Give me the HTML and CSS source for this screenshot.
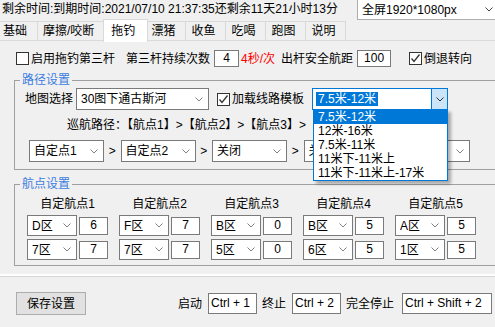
FILE: index.html
```html
<!doctype html>
<html lang="zh">

<head>
    <meta charset="utf-8">
    <title>拖钓设置</title>
    <link rel="stylesheet" href="styles.css">
</head>

<body>
    <div class="topbar">
        <span class="expire">剩余时间:到期时间:2021/07/10 21:37:35还剩余11天21小时13分</span>
        <div class="sel res">全屏1920*1080px<svg class="arr" width="8" height="5" viewBox="0 0 8 5"><path d="M0.5 0.5L4 4L7.5 0.5"/></svg></div>
    </div>

    <div class="tabs">
        <div class="tab">基础</div>
        <div class="tab">摩擦/咬断</div>
        <div class="tab on">拖钓</div>
        <div class="tab">漂猪</div>
        <div class="tab">收鱼</div>
        <div class="tab">吃喝</div>
        <div class="tab">跑图</div>
        <div class="tab">说明</div>
    </div>

    <div class="opts">
        <span class="cb"></span>
        <span class="cb-text">启用拖钓第三杆</span>
        <span class="opt-gap">第三杆持续次数</span>
        <span class="num n-times">4</span>
        <span class="red">4秒/次</span>
        <span class="opt-dist">出杆安全航距</span>
        <span class="num n-dist">100</span>
        <span class="cb checked cb-back"><svg width="11" height="11" viewBox="0 0 11 11"><path d="M1.5 5.5L4 8.5L9.5 1.5"/></svg></span>
        <span class="cb-text">倒退转向</span>
    </div>

    <fieldset class="group route">
        <legend>路径设置</legend>
        <div class="maprow">
            <span>地图选择</span>
            <div class="sel sel-map">30图下通古斯河<svg class="arr" width="8" height="5" viewBox="0 0 8 5"><path d="M0.5 0.5L4 4L7.5 0.5"/></svg></div>
            <span class="cb checked cb-tpl"><svg width="11" height="11" viewBox="0 0 11 11"><path d="M1.5 5.5L4 8.5L9.5 1.5"/></svg></span>
            <span class="cb-text">加载线路模板</span>
            <div class="combo">
                <span class="hl">7.5米-12米</span>
                <span class="combo-btn"><svg width="8" height="5" viewBox="0 0 8 5"><path d="M0.5 0.5L4 4L7.5 0.5"/></svg></span>
                <ul class="droplist">
                    <li class="cur">7.5米-12米</li>
                    <li>12米-16米</li>
                    <li>7.5米-11米</li>
                    <li>11米下-11米上</li>
                    <li>11米下-11米上-17米</li>
                </ul>
            </div>
        </div>
        <div class="cruise">巡航路径：【航点1】&gt;【航点2】&gt;【航点3】&gt;</div>
        <div class="pathrow">
            <div class="sel sel-pt">自定点1<svg class="arr" width="8" height="5" viewBox="0 0 8 5"><path d="M0.5 0.5L4 4L7.5 0.5"/></svg></div>
            <span class="gt">&gt;</span>
            <div class="sel sel-pt">自定点2<svg class="arr" width="8" height="5" viewBox="0 0 8 5"><path d="M0.5 0.5L4 4L7.5 0.5"/></svg></div>
            <span class="gt">&gt;</span>
            <div class="sel sel-pt">关闭<svg class="arr" width="8" height="5" viewBox="0 0 8 5"><path d="M0.5 0.5L4 4L7.5 0.5"/></svg></div>
            <span class="gt">&gt;</span>
            <div class="sel sel-pt">关闭<svg class="arr" width="8" height="5" viewBox="0 0 8 5"><path d="M0.5 0.5L4 4L7.5 0.5"/></svg></div>
            <span class="gt">&gt;</span>
            <div class="sel sel-pt">关闭<svg class="arr" width="8" height="5" viewBox="0 0 8 5"><path d="M0.5 0.5L4 4L7.5 0.5"/></svg></div>
        </div>
    </fieldset>

    <fieldset class="group points">
        <legend>航点设置</legend>
        <div class="wpgrid">
            <div class="wp">
                <div class="wp-title">自定航点1</div>
                <div class="wp-row">
                    <div class="sel sel-zone">D区<svg class="arr" width="8" height="5" viewBox="0 0 8 5"><path d="M0.5 0.5L4 4L7.5 0.5"/></svg></div>
                    <span class="num n-wp">6</span>
                </div>
                <div class="wp-row">
                    <div class="sel sel-zone">7区<svg class="arr" width="8" height="5" viewBox="0 0 8 5"><path d="M0.5 0.5L4 4L7.5 0.5"/></svg></div>
                    <span class="num n-wp">7</span>
                </div>
            </div>
            <div class="wp">
                <div class="wp-title">自定航点2</div>
                <div class="wp-row">
                    <div class="sel sel-zone">F区<svg class="arr" width="8" height="5" viewBox="0 0 8 5"><path d="M0.5 0.5L4 4L7.5 0.5"/></svg></div>
                    <span class="num n-wp">7</span>
                </div>
                <div class="wp-row">
                    <div class="sel sel-zone">7区<svg class="arr" width="8" height="5" viewBox="0 0 8 5"><path d="M0.5 0.5L4 4L7.5 0.5"/></svg></div>
                    <span class="num n-wp">7</span>
                </div>
            </div>
            <div class="wp">
                <div class="wp-title">自定航点3</div>
                <div class="wp-row">
                    <div class="sel sel-zone">B区<svg class="arr" width="8" height="5" viewBox="0 0 8 5"><path d="M0.5 0.5L4 4L7.5 0.5"/></svg></div>
                    <span class="num n-wp">0</span>
                </div>
                <div class="wp-row">
                    <div class="sel sel-zone">5区<svg class="arr" width="8" height="5" viewBox="0 0 8 5"><path d="M0.5 0.5L4 4L7.5 0.5"/></svg></div>
                    <span class="num n-wp">0</span>
                </div>
            </div>
            <div class="wp">
                <div class="wp-title">自定航点4</div>
                <div class="wp-row">
                    <div class="sel sel-zone">B区<svg class="arr" width="8" height="5" viewBox="0 0 8 5"><path d="M0.5 0.5L4 4L7.5 0.5"/></svg></div>
                    <span class="num n-wp">5</span>
                </div>
                <div class="wp-row">
                    <div class="sel sel-zone">6区<svg class="arr" width="8" height="5" viewBox="0 0 8 5"><path d="M0.5 0.5L4 4L7.5 0.5"/></svg></div>
                    <span class="num n-wp">5</span>
                </div>
            </div>
            <div class="wp">
                <div class="wp-title">自定航点5</div>
                <div class="wp-row">
                    <div class="sel sel-zone">A区<svg class="arr" width="8" height="5" viewBox="0 0 8 5"><path d="M0.5 0.5L4 4L7.5 0.5"/></svg></div>
                    <span class="num n-wp">5</span>
                </div>
                <div class="wp-row">
                    <div class="sel sel-zone">1区<svg class="arr" width="8" height="5" viewBox="0 0 8 5"><path d="M0.5 0.5L4 4L7.5 0.5"/></svg></div>
                    <span class="num n-wp">5</span>
                </div>
            </div>
        </div>
    </fieldset>

    <div class="sep"></div>

    <div class="footer">
        <button class="save">保存设置</button>
        <span class="hk-label">启动</span>
        <span class="hotkey hk-short">Ctrl + 1</span>
        <span class="hk-label">终止</span>
        <span class="hotkey hk-short">Ctrl + 2</span>
        <span class="hk-label">完全停止</span>
        <span class="hotkey hk-long">Ctrl + Shift + 2</span>
    </div>
</body>

</html>
```

FILE: styles.css
```css
* {
    box-sizing: border-box;
}

body {
    margin: 0;
    width: 495px;
    height: 327px;
    overflow: hidden;
    background-color: #f0f0f0;
    color: #000;
    font-family: "Liberation Sans", "Noto Sans CJK SC", sans-serif;
    font-size: 12px;
    line-height: 14px;
}

svg path {
    fill: none;
    stroke-width: 1;
}

/* top line */
.topbar {
    display: flex;
    height: 20px;
}

.expire {
    padding: 2px 0 0 2px;
    white-space: nowrap;
}

.sel {
    display: flex;
    align-items: center;
    flex: none;
    background-color: #fff;
    border: 1px solid #7a7a7a;
    padding-left: 4px;
    white-space: nowrap;
}

.sel .arr {
    margin-left: auto;
    margin-right: 5px;
}

.arr path {
    stroke: #808080;
}

.res {
    width: 146px;
    height: 20px;
    margin-left: auto;
    margin-right: -8px;
    border-color: #adadad;
    border-top: none;
    padding-left: 4px;
}

.res .arr {
    margin-right: 9px;
}

.res .arr path {
    stroke: #444;
}

/* tabs */
.tabs {
    display: flex;
    align-items: flex-start;
    height: 20px;
    margin-top: 1px;
    margin-left: -1px;
    border-bottom: 1px solid #d9d9d9;
}

.tab {
    height: 19px;
    padding: 0 10px 0 5px;
    border: 1px solid #d9d9d9;
    border-width: 1px 1px 0 0;
    line-height: 18px;
    white-space: nowrap;
}

.tab:first-child {
    padding-left: 4px;
}

.tab.on {
    position: relative;
    z-index: 1;
    height: 23px;
    margin: -2px -2px 0 -2px;
    padding: 2px 12px 0 7px;
    border-left-width: 1px;
    background-color: #fff;
}

/* first option line */
.opts {
    display: flex;
    align-items: center;
    height: 17px;
    margin-top: 9px;
    padding-left: 16px;
    white-space: nowrap;
}

.cb {
    display: inline-flex;
    align-items: center;
    justify-content: center;
    flex: none;
    width: 13px;
    height: 13px;
    border: 1px solid #333;
    background-color: #fff;
}

.cb path {
    stroke: #333;
    stroke-width: 1.3;
}

.cb-text {
    margin-left: 2px;
}

.opt-gap {
    margin-left: 11px;
}

.num {
    flex: none;
    height: 17px;
    border: 1px solid #7a7a7a;
    background-color: #fff;
    text-align: center;
    line-height: 15px;
}

.n-times {
    width: 25px;
    margin-left: 4px;
}

.red {
    margin-left: 2px;
    color: #f00;
}

.opt-dist {
    margin-left: 6px;
}

.n-dist {
    width: 34px;
    margin-left: 4px;
}

.cb-back {
    margin-left: 18px;
}

/* group boxes */
.group {
    min-width: 0;
    margin: 6px -30px 0 14px;
    padding: 1px 0 7px 10px;
    border: 1px solid #a0a0a0;
}

.group legend {
    margin-left: -5px;
    padding: 0 2px;
    color: #3c7ee0;
    line-height: 14px;
}

.maprow {
    display: flex;
    align-items: center;
    height: 22px;
    white-space: nowrap;
}

.sel-map {
    width: 133px;
    height: 22px;
    margin-left: 3px;
}

.cb-tpl {
    margin-left: 8px;
}

.combo {
    position: relative;
    display: flex;
    align-items: center;
    width: 136px;
    height: 22px;
    margin-left: 8px;
    padding-left: 3px;
    border: 1px solid #0078d7;
    background-color: #fff;
}

.hl {
    padding: 0 2px;
    background-color: #0078d7;
    color: #fff;
    line-height: 14px;
}

.combo-btn {
    display: flex;
    align-items: center;
    justify-content: center;
    width: 16px;
    height: 20px;
    margin-left: auto;
    border-left: 1px solid #0078d7;
    background-color: #cce4f7;
}

.combo-btn path {
    stroke: #333;
}

.droplist {
    position: absolute;
    z-index: 5;
    top: 20px;
    left: 0;
    width: 135px;
    margin: 0;
    padding: 0;
    list-style: none;
    border: 1px solid #0078d7;
    background-color: #fff;
    box-shadow: 3px 3px 3px rgba(0, 0, 0, 0.3);
}

.droplist li {
    height: 14px;
    padding-left: 4px;
    line-height: 14px;
}

.droplist li.cur {
    background-color: #0078d7;
    color: #fff;
}

.cruise {
    margin-top: 8px;
    padding-left: 42px;
    white-space: nowrap;
}

.pathrow {
    display: flex;
    align-items: center;
    margin-top: 8px;
    padding-left: 4px;
}

.sel-pt {
    width: 75px;
    height: 22px;
}

.gt {
    width: 16.5px;
    flex: none;
    text-align: center;
}

.points {
    margin-top: 7px;
    padding: 6px 0 5px 10px;
}

.wpgrid {
    display: flex;
    gap: 11px;
    padding-left: 2px;
}

.wp {
    width: 81px;
}

.wp-title {
    height: 14px;
    margin-bottom: 4px;
    text-align: center;
}

.wp-row {
    display: flex;
    align-items: center;
    gap: 2px;
    height: 21px;
    margin-bottom: 3px;
}

.wp-row:last-child {
    margin-bottom: 0;
}

.sel-zone {
    width: 50px;
    height: 21px;
}

.n-wp {
    width: 29px;
    height: 18px;
}

/* bottom */
.sep {
    margin-top: 8px;
    border-top: 2px solid #fff;
    border-bottom: 1px solid #d8d8d8;
}

.footer {
    display: flex;
    align-items: center;
    padding: 15px 3px 0 16px;
    white-space: nowrap;
}

.save {
    width: 70px;
    height: 23px;
    margin: 0 auto 0 0;
    padding: 0;
    border: 1px solid #adadad;
    background-color: #e1e1e1;
    color: #000;
    font: inherit;
}

.hk-label {
    margin-left: 5px;
}

.hk-label:nth-child(2) {
    margin-left: 0;
}

.hotkey {
    height: 21px;
    margin-left: 6px;
    padding-left: 2px;
    border: 1px solid #7a7a7a;
    background-color: #fff;
    line-height: 19px;
}

.hk-short {
    width: 49px;
}

.hk-long {
    width: 90px;
    margin-left: 8px;
}
```
